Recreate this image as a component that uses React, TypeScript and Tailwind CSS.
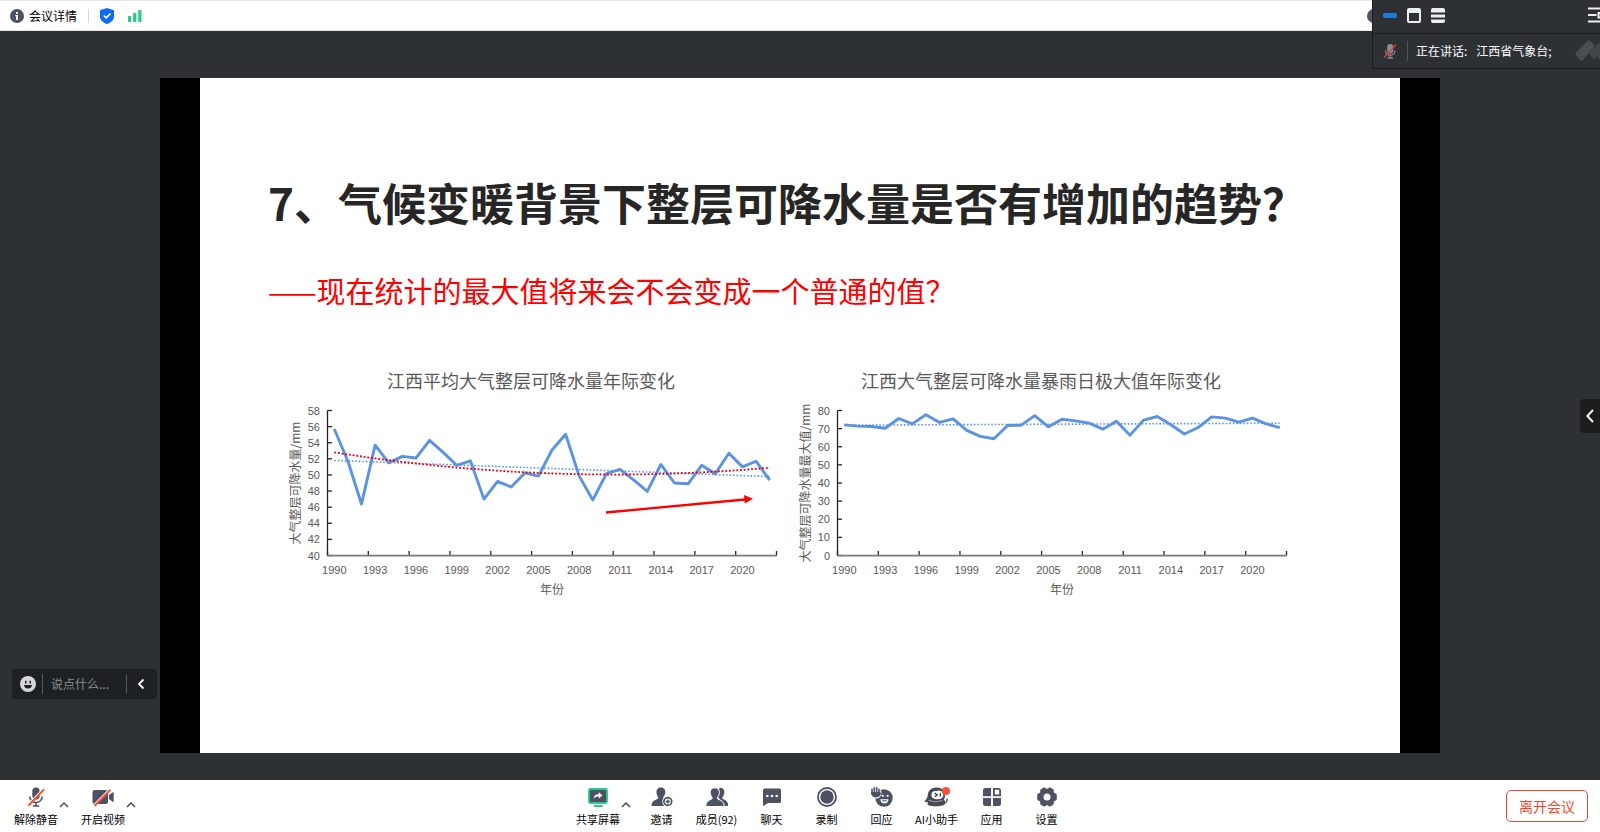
import type { ReactNode } from "react";

const INK = "#4c5263";
const ALERT = "#ff5034";

const AVERAGE = [
  55.7, 51.7, 46.4, 53.7, 51.5, 52.3, 52.1, 54.3, 52.8, 51.2, 51.75, 47.0, 49.2, 48.5, 50.25, 49.85, 53.1, 55.05,
  49.85, 46.9, 50.15, 50.7, 49.4, 47.95, 51.3, 49.0, 48.9, 51.2, 50.15, 52.7, 51.0, 51.7, 49.35,
];
const MAXIMUM = [
  72.1, 71.4, 71.2, 70.2, 75.6, 72.6, 77.7, 73.4, 75.4, 69, 65.7, 64.4, 71.7, 71.9, 77.2, 71, 75.2, 74.3, 73,
  69.7, 74.1, 66.4, 74.7, 76.7, 72.1, 67, 70.6, 76.5, 75.8, 73.6, 75.8, 72.6, 70.6,
];
const QUADRATIC = AVERAGE.map((_, i) => 50.05 + 0.0065 * (i - 20.57) ** 2);

type ChartProps = {
  title: string;
  unit: string;
  data: number[];
  min: number;
  max: number;
  step: number;
  trend: [number, number];
  curve?: number[];
  children?: ReactNode;
};

function Chart({ title, unit, data, min, max, step, trend, curve, children }: ChartProps) {
  const left = 47.5;
  const right = 496.5;
  const top = 20.5;
  const bottom = 165.5;
  const slot = (right - left) / data.length;
  const px = (i: number) => left + slot * (i + 0.5);
  const py = (v: number) => bottom - ((v - min) / (max - min)) * (bottom - top);
  const line = (values: number[]) => values.map((v, i) => `${px(i)},${py(v)}`).join(" ");
  const levels = Array.from({ length: (max - min) / step + 1 }, (_, i) => min + i * step);
  const ticks = Array.from({ length: data.length / 3 + 1 }, (_, i) => i * 3);

  return (
    <figure className="min-w-0 flex-1">
      <figcaption className="pr-2 text-center text-[18px] leading-6 text-[#595959]">{title}</figcaption>
      <svg viewBox="0 0 510 210" className="mt-[-2px] w-full fill-[#595959]" role="img" aria-label={title}>
        <g className="font-['Liberation_Sans',sans-serif] text-[11px]">
          {levels.map((v) => (
            <text key={v} x="40" y={py(v) + 4} textAnchor="end">
              {v}
            </text>
          ))}
          {ticks.slice(0, -1).map((i) => (
            <text key={i} x={px(i)} y="184" textAnchor="middle">
              {1990 + i}
            </text>
          ))}
        </g>
        <g stroke="#222" strokeWidth="1.3">
          <path d={`M${left} ${top}V${bottom}`} />
          {levels.map((v) => (
            <path key={v} d={`M${left} ${py(v)}h4.5`} />
          ))}
          {ticks.map((i) => (
            <path key={i} d={`M${left + slot * i} ${bottom}v-4.5`} />
          ))}
        </g>
        <path d={`M${left} ${bottom + 0.2}H${right}`} stroke="#7a7a7a" strokeWidth="1.8" />
        <polyline points={line(data)} fill="none" stroke="#5b93e3" strokeWidth="2.9" strokeLinejoin="round" />
        <path
          d={`M${px(0)} ${py(trend[0])}L${px(data.length - 1)} ${py(trend[1])}`}
          stroke="#5b93e3"
          strokeWidth="1.6"
          strokeDasharray="1.6 1.9"
        />
        {curve && (
          <polyline points={line(curve)} fill="none" stroke="#e60012" strokeWidth="1.8" strokeDasharray="1.9 1.8" />
        )}
        <text x="272" y="204" textAnchor="middle" className="text-[12px]">
          年份
        </text>
        <text transform="translate(20 93) rotate(-90)" textAnchor="middle" className="text-[12px]">
          {unit}
        </text>
        {children}
      </svg>
    </figure>
  );
}

function Glyph({ children }: { children: ReactNode }) {
  return (
    <svg viewBox="0 0 22 20" className="h-5 w-[22px]" fill={INK} aria-hidden="true">
      {children}
    </svg>
  );
}

const Mic = (
  <Glyph>
    <rect x="7.3" y="0.5" width="7.4" height="12" rx="3.7" />
    <path d="M4.8 9.5a6.2 6 0 0 0 12.4 0M11 15.5V18.6M7.8 19h6.4" fill="none" stroke={INK} strokeWidth="1.6" />
    <path d="M2.4 17.9L18.4 1.6" stroke="#fff" strokeWidth="1.4" />
    <path d="M3.3 18.8L19 2.5" stroke={ALERT} strokeWidth="2" />
  </Glyph>
);
const Camera = (
  <Glyph>
    <rect x="0.5" y="3" width="15.5" height="14" rx="2.5" />
    <path d="M17 8l3.5-2.6q1.2-.6 1.2.7v8q0 1.2-1.2.6L17 12z" />
    <path d="M1.600 17.900L17.600 1.900" stroke="#fff" strokeWidth="1.400" />
    <path d="M2.5 18.8L18.5 2.8" stroke={ALERT} strokeWidth="2" />
  </Glyph>
);
const Share = (
  <Glyph>
    <rect x="2" y="2" width="18" height="14" rx="1.5" stroke="#27c98c" strokeWidth="1.8" />
    <rect x="6.5" y="18" width="9.5" height="2" rx="1" fill="#27c98c" />
    <path d="M11.8 5.300l3.700 3.200-3.700 3V9.600c-2.200 0-3.800.4-5.100 1.800.2-2.600 1.900-4.100 5.100-4.300z" fill="#fff" />
  </Glyph>
);
const Invite = (
  <Glyph>
    <path d="M10 .5c3 0 4.500 2.100 4.300 5-.2 2-.9 3.400-1.800 4.500-.6.9-.3 1.500.5 2l1.200.5-1.200 6.500H1.300c-.8 0-1.100-.8-.7-2 .7-2.600 2.600-3.900 5.700-5 1-.4 1.300-1.300.7-2.100C6.200 9 5.600 7.500 5.500 5.500 5.300 2.600 7 .5 10 .5z" />
    <circle cx="16.800" cy="14.500" r="5.500" fill="#fff" />
    <circle cx="16.800" cy="14.500" r="3.900" fill="none" stroke={INK} strokeWidth="1.700" />
    <path d="M16.800 12.400v4.200M14.700 14.500h4.200" stroke={INK} strokeWidth="1.500" />
  </Glyph>
);
const Members = (
  <Glyph>
    <path d="M13.500.8c3.400-.3 5 2 4.800 4.700-.1 1.900-.8 3.200-1.700 4.400-.6.900-.4 1.700.5 2.100 2.800 1.200 4.300 2.500 5 5 .3 1.300.1 2-.8 2H19l-7-9z" />
    <path
      d="M8.800.8c3.100 0 4.800 2 4.600 4.900-.1 1.900-.9 3.300-1.800 4.400-.6.800-.3 1.700.6 2.100 3 1.200 5 2.500 5.700 5 .3 1.300 0 2.300-1 2.300H.9c-.9 0-1.200-.9-.8-2.300.7-2.500 2.300-3.700 5.200-5 .9-.4 1.200-1.200.6-2.100C5 9 4.300 7.600 4.200 5.700 4 2.800 5.700.8 8.800.8z"
      stroke="#fff"
      strokeWidth="1"
    />
  </Glyph>
);
const Chat = (
  <Glyph>
    <path d="M3.500 1.500h15q1.500 0 1.500 1.500v11.500q0 1.500-1.500 1.500H7l-3.800 2.600q-1.200.7-1.200-.7V3q0-1.500 1.500-1.500z" />
    <g fill="#fff">
      <circle cx="6.300" cy="9" r="1.300" />
      <circle cx="11" cy="9" r="1.300" />
      <circle cx="15.700" cy="9" r="1.300" />
    </g>
  </Glyph>
);
const Record = (
  <Glyph>
    <circle cx="11" cy="10" r="9" fill="none" stroke={INK} strokeWidth="1.800" />
    <circle cx="11" cy="10" r="6.700" />
  </Glyph>
);
const Wave = (
  <Glyph>
    <circle cx="13" cy="11" r="8.700" />
    <circle cx="5.200" cy="6.300" r="5.300" fill="#fff" />
    <path d="M1 2.200v5M3.300.8v6M5.700.8v6M8 2.200v5M9.500 6.300L7.500 9" fill="none" stroke={INK} strokeWidth="1.600" strokeLinecap="round" />
    <path d="M.2 5h8.600v2.500q-1 3-4 3T.2 7z" />
    <g fill="#fff">
      <circle cx="11.800" cy="8.800" r="1.100" />
      <circle cx="16.600" cy="8.800" r="1.100" />
      <path d="M9.300 12.200h8.200c-.3 2.800-1.800 4.300-4.100 4.300S9.600 15 9.300 12.200z" />
    </g>
    <path d="M11 13.200h4.800l-.3 1h-4.200z" fill={INK} />
  </Glyph>
);
const Assistant = (
  <svg viewBox="0 0 26 20" className="h-5 w-[26px]" aria-hidden="true">
    <path
      d="M12.500.5C18 .5 21 3.700 21 8.500c0 1.700-.3 3-1 4.200 1.500 1.300 1.700 3.300.9 4.500-2.500 2.500-13 2.600-16.300 1-1.500-.8-1.300-2.300-.6-3.500-1.300.6-3 .7-3.300.1C.2 13.500 3.500 12 3.700 8.500 4 3.600 7.400.5 12.500.5z"
      fill="#474a52"
    />
    <path d="M23.200 11.500q.3 2.800-1.700 4.600" fill="none" stroke="#474a52" strokeWidth="1.400" />
    <path d="M4.500 13.300q6 3 14 .3" fill="none" stroke="#fff" strokeWidth=".8" opacity=".6" />
    <path d="M7.500 8c0-3 2.200-4.700 4.700-3.800C14.500 2.900 19 3.500 19.300 7.500c.3 3-2.200 4.700-5.500 4.700-3.900 0-6.300-1.200-6.300-4.200z" fill="#fff" />
    <path d="M10.800 6l2.300 2-2.300 1.800M16.300 6.300v3.200" fill="none" stroke="#303238" strokeWidth="1.300" />
    <circle cx="22" cy="4" r="4" fill={ALERT} />
  </svg>
);
const Apps = (
  <Glyph>
    <path d="M4.200 1H10v8.200H2V3.200Q2 1 4.200 1zM2 11h8v8H4.200Q2 19 2 16.800zM12 11h8v5.800Q20 19 17.800 19H12z" />
    <path d="M12.900 1.900h4.700q1.500 0 1.500 1.500v4.900h-6.200z" fill="none" stroke={INK} strokeWidth="1.800" />
  </Glyph>
);
const Settings = (
  <Glyph>
    <path
      fillRule="evenodd"
      d="M7.800.5q.7-.3 1.300.2L11 2 12.900.7q.6-.5 1.300-.2l3 1.700q.6.4.6 1.100v2.200l2.300 1.200q.7.400.7 1.200v4.200q0 .8-.7 1.200l-2.300 1.200v2.200q0 .7-.6 1.100l-3 1.700q-.7.300-1.300-.2L11 18l-1.900 1.300q-.6.500-1.300.2l-3-1.700q-.6-.4-.6-1.100v-2.200l-2.300-1.200q-.7-.4-.7-1.200V7.900q0-.8.7-1.200l2.300-1.200V3.300q0-.7.6-1.100zM11 6.500a3.500 3.500 0 1 0 0 7 3.500 3.500 0 0 0 0-7z"
    />
  </Glyph>
);

function Tool({ icon, label, className }: { icon: ReactNode; label: string; className: string }) {
  return (
    <button type="button" className={`flex flex-col items-center gap-1 whitespace-nowrap ${className}`}>
      {icon}
      <span className="text-[11px] leading-4 text-black">{label}</span>
    </button>
  );
}

function More({ label }: { label: string }) {
  return (
    <button type="button" aria-label={label} className="flex w-[14px] pt-[14px] pl-px">
      <svg viewBox="0 0 10 8" className="h-2 w-[10px]" fill="none" stroke="#4a4a4a" strokeWidth="1.500" aria-hidden="true">
        <path d="M1 6l4-4 4 4" />
      </svg>
    </button>
  );
}

const Info = (
  <svg viewBox="0 0 14 14" className="size-[14px]" aria-hidden="true">
    <circle cx="7" cy="7" r="7" fill="#4c5263" />
    <path d="M6 3h2v1.800H6zM5.300 6H8v5H6V7.200h-.7z" fill="#fff" />
  </svg>
);

export default function App() {
  return (
    <div className="flex min-h-screen flex-col overflow-hidden bg-[#2d3134] font-['Noto_Sans_CJK_SC',sans-serif]">
      <header className="flex h-[31px] items-center border-y border-[#e6e7ec] bg-white pl-[10px]">
        <button type="button" className="flex items-center gap-[5px] text-[12px] leading-4 text-black">
          {Info}
          会议详情
        </button>
        <span className="ml-[11px] h-[14px] w-px bg-[#d4d6da]" />
        <button type="button" aria-label="会议安全" className="ml-[11px]">
          <svg viewBox="0 0 14 16" className="h-4 w-[14px]" aria-hidden="true">
            <path d="M7 0l7 2.200v6.300c0 3.600-2.900 6.100-7 7.500-4.100-1.400-7-3.900-7-7.500V2.200z" fill="#0a6cff" />
            <path d="M3.700 7.500l2.500 2.400 4.200-4.300" fill="none" stroke="#fff" strokeWidth="1.700" />
          </svg>
        </button>
        <button type="button" aria-label="网络状态" className="ml-[14px]">
          <svg viewBox="0 0 14 12" className="h-3 w-[14px]" fill="#29cc8d" aria-hidden="true">
            <rect y="6" width="3.300" height="6" rx=".7" />
            <rect x="5.100" y="3" width="3.300" height="9" rx=".7" />
            <rect x="10.200" width="3.300" height="12" rx=".7" />
          </svg>
        </button>
        <button type="button" aria-label="提示" className="mr-[219px] ml-auto">
          {Info}
        </button>
      </header>

      <section
        aria-label="正在讲话"
        className="absolute top-0 right-0 w-[228px] overflow-hidden border-b border-l border-[#191b1c] bg-[#2d3134]"
      >
        <div className="flex h-[33px] items-center pb-[3px] pl-[10px]">
          <button type="button" aria-label="最小化" className="h-[5px] w-[14px] rounded-xs bg-[#1d7bdc]" />
          <button type="button" aria-label="窗口" className="ml-[10px]">
            <svg viewBox="0 0 14 15" className="h-[15px] w-[14px]" aria-hidden="true">
              <path
                fillRule="evenodd"
                fill="#eceeef"
                d="M2 0h10q2 0 2 2v11q0 2-2 2H2q-2 0-2-2V2Q0 0 2 0zM2 5v8h10V5z"
              />
            </svg>
          </button>
          <button type="button" aria-label="列表" className="ml-[10px]">
            <svg viewBox="0 0 14 15" className="h-[15px] w-[14px]" fill="#eceeef" aria-hidden="true">
              <path d="M2 0h10q2 0 2 2v2.500H0V2Q0 0 2 0zM0 6.500h14v3H0zM0 11.500h14V13q0 2-2 2H2q-2 0-2-2z" />
            </svg>
          </button>
          <button type="button" aria-label="更多" className="mr-[-5px] ml-auto">
            <svg viewBox="0 0 17 16" className="h-4 w-[17px]" aria-hidden="true">
              <path d="M0 1.500h17M0 8h8.500M0 14.500h17" stroke="#eceeef" strokeWidth="2" />
              <rect x="10.500" y="6" width="6" height="4.500" fill="none" stroke="#eceeef" strokeWidth="2" />
            </svg>
          </button>
        </div>
        <div className="flex h-[35px] items-center border-t border-[#191b1c] pl-[10px] text-[12px] text-white">
          <svg viewBox="0 0 14 16" className="h-4 w-[14px]" aria-hidden="true">
            <rect x="4.200" y="1" width="6" height="9.500" rx="3" fill="#8b8e90" />
            <path d="M2.500 7.500a4.700 4.700 0 0 0 9.400 0M7.200 12v3M4.500 15h5.400" fill="none" stroke="#8b8e90" strokeWidth="1.300" />
            <path d="M1 14.500L13 1.500" stroke="#e0433a" strokeWidth="1.400" />
          </svg>
          <span className="ml-[10px] h-5 w-px bg-[#515558]" />
          <span className="ml-2 whitespace-nowrap">正在讲话:</span>
          <span className="ml-[9px] whitespace-nowrap">江西省气象台;</span>
          <svg viewBox="0 0 36 24" className="mr-[-11px] ml-auto h-6 w-9 shrink-0" aria-hidden="true">
            <path d="M1 13.500L12.500 2q1.500-1.500 3 0L20 7 7.500 21.500q-1 1-2 0L1 16q-1-1.200 0-2.500z" fill="#4b4e51" />
            <path d="M14 14.500L25 2.500l11 11-8.500 8q-1 1-2 0l-3.500-4-3 3.500z" fill="#434649" />
          </svg>
        </div>
      </section>

      <main className="relative flex flex-1 px-[10%] pt-[47px] pb-[27px]">
        <div className="flex flex-1 bg-black px-10">
          <article className="min-w-0 flex-1 bg-white pt-[92px]">
            <h1 className="pl-[68px] text-[44px] leading-[64px] font-bold whitespace-nowrap text-[#262626]">
              7、气候变暖背景下整层可降水量是否有增加的趋势？
            </h1>
            <p className="mt-9 pl-[68px] text-[29px] leading-10 whitespace-nowrap text-[#ff0000]">
              ——现在统计的最大值将来会不会变成一个普通的值？
            </p>
            <div className="mt-[58px] flex pr-[100px] pl-20">
              <Chart
                title="江西平均大气整层可降水量年际变化"
                unit="大气整层可降水量/mm"
                data={AVERAGE}
                min={40}
                max={58}
                step={2}
                trend={[51.8, 49.8]}
                curve={QUADRATIC}
              >
                <path d="M326 122.500L465 109.500" stroke="#f00" strokeWidth="2.300" />
                <path d="M464 105L473 108.700L464.800 113.500z" fill="#f00" />
              </Chart>
              <Chart
                title="江西大气整层可降水量暴雨日极大值年际变化"
                unit="大气整层可降水量最大值/mm"
                data={MAXIMUM}
                min={0}
                max={80}
                step={10}
                trend={[71.9, 73]}
              />
            </div>
          </article>
        </div>

        <div className="absolute bottom-[81px] left-3 flex h-[30px] w-[145px] items-center rounded-sm bg-[#1d2123] pl-2">
          <button type="button" aria-label="表情">
            <svg viewBox="0 0 16 16" className="size-4" aria-hidden="true">
              <circle cx="8" cy="8" r="8" fill="#d6d8d8" />
              <path d="M5 4.800h1.500v2.700H5zM9.500 4.800H11v2.700H9.500zM4 9h8q-.5 3.500-4 3.500T4 9z" fill="#1d2123" />
            </svg>
          </button>
          <span className="ml-[6px] h-5 w-px bg-[#54585a]" />
          <input
            aria-label="说点什么"
            placeholder="说点什么..."
            className="ml-2 w-[75px] bg-transparent text-[12px] text-white outline-none placeholder:text-[#8d9092]"
          />
          <span className="h-5 w-px bg-[#54585a]" />
          <button type="button" aria-label="收起" className="flex flex-1 justify-center pr-[2px]">
            <svg viewBox="0 0 8 12" className="h-3 w-2" fill="none" stroke="#fff" strokeWidth="1.800" aria-hidden="true">
              <path d="M6.500 1.500L2 6l4.500 4.500" />
            </svg>
          </button>
        </div>

        <button
          type="button"
          aria-label="展开侧栏"
          className="absolute top-[368px] right-0 flex h-[34px] w-5 items-center justify-center rounded-l-sm bg-[#1b1d1e]"
        >
          <svg viewBox="0 0 8 14" className="h-[14px] w-2" fill="none" stroke="#fff" strokeWidth="1.900" aria-hidden="true">
            <path d="M7 1L1.300 7 7 13" />
          </svg>
        </button>
      </main>

      <footer className="flex h-[52px] items-start justify-between bg-white pt-[7px] pr-3 pl-[14px]">
        <div className="flex gap-[9px] pr-[5px]">
          <div className="flex">
            <Tool icon={Mic} label="解除静音" className="w-11" />
            <More label="音频选项" />
          </div>
          <div className="flex">
            <Tool icon={Camera} label="开启视频" className="w-11" />
            <More label="视频选项" />
          </div>
        </div>
        <div className="flex">
          <Tool icon={Share} label="共享屏幕" className="w-11" />
          <More label="共享选项" />
          <Tool icon={Invite} label="邀请" className="w-[55px]" />
          <Tool icon={Members} label="成员(92)" className="w-[55px]" />
          <Tool icon={Chat} label="聊天" className="w-[55px]" />
          <Tool icon={Record} label="录制" className="w-[55px]" />
          <Tool icon={Wave} label="回应" className="w-[55px]" />
          <Tool icon={Assistant} label="AI小助手" className="w-[55px]" />
          <Tool icon={Apps} label="应用" className="w-[55px]" />
          <Tool icon={Settings} label="设置" className="w-[55px]" />
        </div>
        <button
          type="button"
          className="mt-[3px] h-8 w-[82px] rounded-[5px] border border-[#ee4631] text-[14px] text-[#f5492f]"
        >
          离开会议
        </button>
      </footer>
    </div>
  );
}
